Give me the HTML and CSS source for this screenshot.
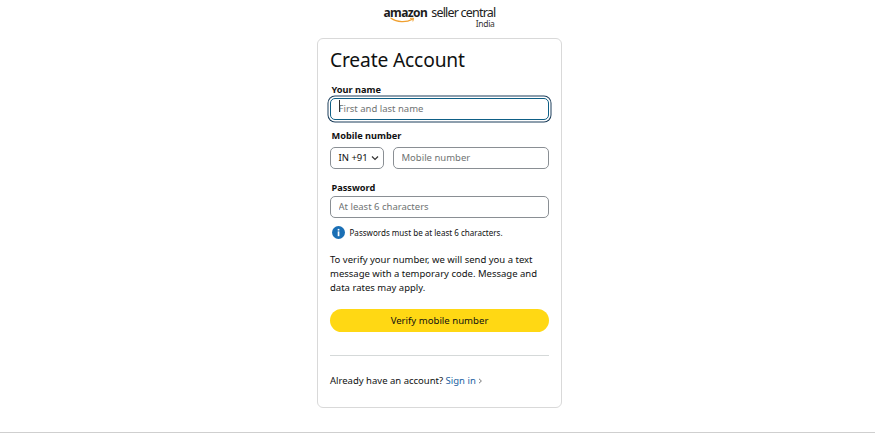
FILE: index.html
```html
<!DOCTYPE html>
<html lang="en">
<head>
<meta charset="utf-8">
<title>Create Account</title>
<link rel="stylesheet" href="styles.css">
</head>
<body>
<header class="logo">
  <div class="logo-inner">
    <div class="logo-line">
      <span class="logo-amazon">amazon</span>
      <span class="logo-seller">seller central</span>
    </div>
    <svg class="logo-smile" width="26" height="7" viewBox="0 0 26 7" aria-hidden="true">
      <path d="M1 1.2C7 5.4 16 5.8 22.5 2.2" fill="none" stroke="#f0a030" stroke-width="1.3" stroke-linecap="round"/>
      <path d="M20 1.4L23.6 1.2L22.8 4.4" fill="none" stroke="#f0a030" stroke-width="1"/>
    </svg>
    <span class="logo-india">India</span>
  </div>
</header>
<main class="card">
  <h1 class="title">Create Account</h1>
  <form class="form">
    <label class="label" for="name">Your name</label>
    <div class="focus-wrap">
      <input class="input input-focus" id="name" type="text" placeholder="First and last name">
      <span class="caret"></span>
    </div>
    <label class="label label-mobile" for="mobile">Mobile number</label>
    <div class="phone-row">
      <button class="country" type="button">IN +91
        <svg width="8" height="6" viewBox="0 0 8 6" aria-hidden="true"><path d="M1 1.5L4 4.5L7 1.5" fill="none" stroke="#333" stroke-width="1.2"/></svg>
      </button>
      <input class="input input-phone" id="mobile" type="text" placeholder="Mobile number">
    </div>
    <label class="label label-password" for="password">Password</label>
    <input class="input" id="password" type="text" placeholder="At least 6 characters">
    <div class="hint">
      <svg width="13" height="13" viewBox="0 0 13 13" aria-hidden="true">
        <circle cx="6.5" cy="6.5" r="6.5" fill="#1a6fb5"/>
        <rect x="5.7" y="5.4" width="1.7" height="4.8" fill="#fff"/>
        <rect x="5.7" y="2.9" width="1.7" height="1.6" fill="#fff"/>
      </svg>
      <span>Passwords must be at least 6 characters.</span>
    </div>
    <p class="notice">To verify your number, we will send you a text message with a temporary code. Message and data rates may apply.</p>
    <button class="submit" type="button">Verify mobile number</button>
  </form>
  <hr class="divider">
  <p class="signin">Already have an account? <a class="signin-link" href="#">Sign in</a>
    <svg width="5" height="6" viewBox="0 0 5 6" aria-hidden="true"><path d="M1 .8L3.4 3L1 5.2" fill="none" stroke="#555" stroke-width=".8"/></svg>
  </p>
</main>
<div class="footer-line"></div>
</body>
</html>
```
FILE: styles.css
```css
* { box-sizing: border-box; }
html, body { margin: 0; padding: 0; }
body {
  width: 875px;
  height: 438px;
  overflow: hidden;
  background: #fff;
  color: #0f1111;
  font-family: "Noto Sans", "Liberation Sans", sans-serif;
  display: flex;
  flex-direction: column;
  align-items: center;
}
.logo {
  height: 38px;
  width: 100%;
  display: flex;
  justify-content: center;
  padding-top: 5px;
}
.logo-inner { position: relative; width: 112px; height: 28px; margin-left: 4px; }
.logo-line { display: flex; align-items: baseline; gap: 4px; line-height: 14px; white-space: nowrap; padding-top: 1px; }
.logo-amazon { font-size: 12px; font-weight: 700; letter-spacing: -0.6px; color: #1c1c1c; }
.logo-seller { font-size: 12.5px; letter-spacing: -0.8px; color: #222; font-weight: 400; }
.logo-smile { position: absolute; left: 6px; top: 12px; }
.logo-india { position: absolute; right: 1px; top: 15px; font-size: 8.5px; line-height: 8px; letter-spacing: -0.3px; color: #333; }
.card {
  width: 245px;
  height: 370px;
  margin-left: 4px;
  border: 1px solid #d9d9d9;
  border-radius: 6px;
  padding: 7px 12px 0;
}
.title { margin: 0; font-size: 19.2px; letter-spacing: -0.15px; font-weight: 400; line-height: 28px; color: #0f1111; }
.form { display: flex; flex-direction: column; }
.label { font-size: 9.2px; font-weight: 700; line-height: 11px; padding-left: 1.5px; margin-top: 10px; margin-bottom: 0; color: #111; }
.label-mobile { margin-top: 10px; margin-bottom: 6px; }
.label-password { margin-top: 13px; margin-bottom: 3px; }
.input {
  width: 100%;
  height: 22px;
  border: 1px solid #8a8f94;
  border-radius: 5px;
  padding: 0 7.5px;
  font-family: inherit;
  font-size: 9.5px;
  color: #111;
  outline: none;
  background: #fff;
}
.input::placeholder { color: #6f7373; opacity: 1; }
.focus-wrap { position: relative; }
.input-focus {
  border: 1px solid #0e5f86;
  height: 22px;
  box-shadow: 0 0 0 1.5px #fff, 0 0 0 2.5px #1d3f5c;
  background: #fff;
}
.caret { position: absolute; left: 8.5px; top: 5px; width: 1px; height: 12px; background: #333; }
.phone-row { display: flex; gap: 9px; }
.country {
  flex: none;
  width: 54px;
  height: 22px;
  border: 1px solid #8a8f94;
  border-radius: 5px;
  background: #fff;
  font-family: inherit;
  font-size: 9.5px;
  color: #111;
  display: flex;
  align-items: center;
  gap: 3px;
  padding: 0 0 0 7.5px;
}
.input-phone { flex: 1; width: auto; }
.hint { display: flex; align-items: center; gap: 5px; margin-top: 7px; padding-left: 1.5px; height: 15px; font-size: 8.05px; color: #111; }
.notice { margin: 13px 0 0; font-size: 9.5px; line-height: 14.3px; color: #0f1111; }
.submit {
  margin-top: 14px;
  height: 23px;
  border: 0;
  border-radius: 12px;
  background: #ffd814;
  font-family: inherit;
  font-size: 9.6px;
  color: #0f1111;
  padding: 0;
}
.divider { margin: 23px 0 0; border: 0; border-top: 1px solid #d5d9d9; }
.signin { margin: 15px 0 0; font-size: 9.5px; line-height: 20px; color: #0f1111; }
.signin-link { color: #2162a1; text-decoration: none; }
.footer-line { margin-top: 24px; width: 100%; height: 1px; background: #cfcfcf; }
```
